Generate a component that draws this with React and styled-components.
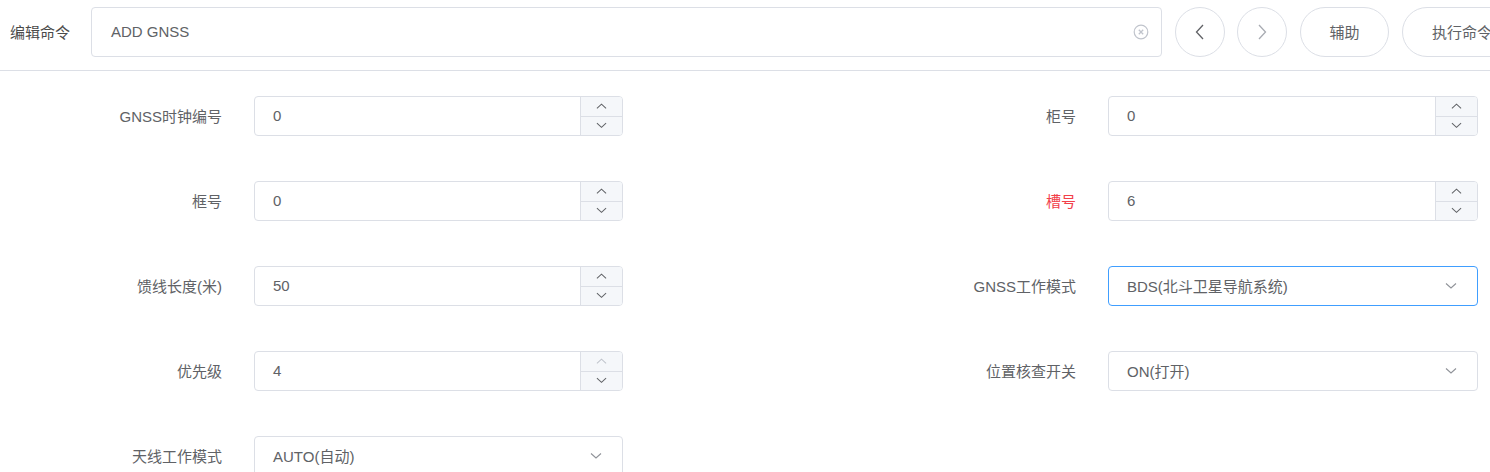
import React from "react";
import styled, { createGlobalStyle } from "styled-components";

const Global = createGlobalStyle`
  html, body { margin: 0; padding: 0; background: #fff; overflow: hidden; }
  body { font-family: "Liberation Sans", "Noto Sans CJK SC", sans-serif; color: #606266; }
  * { box-sizing: border-box; }
`;

const Page = styled.div`
  width: 1490px;
  height: 472px;
  overflow: hidden;
`;

const TopBar = styled.div`
  display: flex;
  align-items: center;
  height: 71px;
  padding: 7px 0 14px 10px;
  border-bottom: 1px solid #dcdfe6;
  white-space: nowrap;
`;

const TopLabel = styled.div`
  width: 81px;
  flex: none;
  font-size: 15px;
  color: #4a4a4a;
`;

const CmdInput = styled.div`
  position: relative;
  flex: none;
  width: 1071px;
  height: 50px;
  border: 1px solid #dcdfe6;
  border-radius: 4px;
  display: flex;
  align-items: center;
  padding-left: 19px;
  font-size: 15px;
  color: #606266;
`;

const ClearIcon = styled.span`
  position: absolute;
  right: 12px;
  top: 50%;
  transform: translateY(-50%);
  display: flex;
`;

const Circle = styled.button`
  flex: none;
  width: 50px;
  height: 50px;
  margin-left: ${(p) => p.$ml}px;
  border: 1px solid #dcdfe6;
  border-radius: 50%;
  background: #fff;
  display: flex;
  align-items: center;
  justify-content: center;
  padding: 0;
`;

const Pill = styled.button`
  flex: none;
  width: ${(p) => p.$w}px;
  height: 50px;
  margin-left: 13px;
  border: 1px solid #dcdfe6;
  border-radius: 25px;
  background: #fff;
  font-family: inherit;
  font-size: 15px;
  color: #606266;
  padding: 0;
  white-space: nowrap;
`;

const FormGrid = styled.div`
  display: grid;
  grid-template-columns: 222px 369px 421px 370px;
  column-gap: 32px;
  row-gap: 45px;
  padding-top: 25px;
`;

const Label = styled.div`
  height: 40px;
  display: flex;
  align-items: center;
  justify-content: flex-end;
  padding-bottom: 1px;
  font-size: 15px;
  color: ${(p) => (p.$required ? "#f2404a" : "#606266")};
  white-space: nowrap;
`;

const Box = styled.div`
  position: relative;
  height: 40px;
  border: 1px solid ${(p) => (p.$focus ? "#409eff" : "#dcdfe6")};
  border-radius: 4px;
  display: flex;
  align-items: center;
  padding-left: 18px;
  font-size: 15px;
  color: #606266;
  background: #fff;
  overflow: hidden;
`;

const Value = styled.span`
  flex: 1;
  white-space: nowrap;
  padding-bottom: 1px;
`;

const Stepper = styled.div`
  align-self: stretch;
  width: 42px;
  display: flex;
  flex-direction: column;
  border-left: 1px solid #dcdfe6;
  background: #f5f7fa;
`;

const StepBtn = styled.div`
  flex: 1;
  display: flex;
  align-items: center;
  justify-content: center;
  & + & { border-top: 1px solid #dcdfe6; }
`;

const Arrow = styled.span`
  width: 40px;
  display: flex;
  justify-content: center;
  padding-right: 12px;
`;

const Chevron = ({ dir = "down", color = "#606266", size = 10 }) => {
  const d =
    dir === "down"
      ? "M1 3.5 L6 8 L11 3.5"
      : dir === "up"
      ? "M1 8 L6 3.5 L11 8"
      : dir === "left"
      ? "M8 1 L3 6 L8 11"
      : "M4 1 L9 6 L4 11";
  return (
    <svg width={size} height={size} viewBox="0 0 12 12" fill="none">
      <path d={d} stroke={color} strokeWidth="1.1" />
    </svg>
  );
};

const NumberField = ({ value, upDisabled }) => (
  <Box>
    <Value>{value}</Value>
    <Stepper>
      <StepBtn>
        <Chevron dir="up" color={upDisabled ? "#c0c4cc" : "#606266"} size={11} />
      </StepBtn>
      <StepBtn>
        <Chevron dir="down" size={11} />
      </StepBtn>
    </Stepper>
  </Box>
);

const SelectField = ({ value, focus }) => (
  <Box $focus={focus}>
    <Value>{value}</Value>
    <Arrow>
      <Chevron dir="down" color="#909399" size={12} />
    </Arrow>
  </Box>
);

const Empty = styled.div``;

export default function App() {
  return (
    <Page>
      <Global />
      <TopBar>
        <TopLabel>编辑命令</TopLabel>
        <CmdInput>
          ADD GNSS
          <ClearIcon>
            <svg width="16" height="16" viewBox="0 0 16 16" fill="none">
              <circle cx="8" cy="8" r="6.8" stroke="#c0c4cc" strokeWidth="1.2" />
              <path d="M5.8 5.8 L10.2 10.2 M10.2 5.8 L5.8 10.2" stroke="#c0c4cc" strokeWidth="1.3" />
            </svg>
          </ClearIcon>
        </CmdInput>
        <Circle $ml={13}>
          <svg width="16" height="18" viewBox="0 0 16 18" fill="none">
            <path d="M11 2 L4.5 9 L11 16" stroke="#606266" strokeWidth="1.3" />
          </svg>
        </Circle>
        <Circle $ml={12}>
          <svg width="16" height="18" viewBox="0 0 16 18" fill="none">
            <path d="M5 2 L11.5 9 L5 16" stroke="#a8abb2" strokeWidth="1.3" />
          </svg>
        </Circle>
        <Pill $w={89}>辅助</Pill>
        <Pill $w={120}>执行命令</Pill>
      </TopBar>
      <FormGrid>
        <Label>GNSS时钟编号</Label>
        <NumberField value="0" />
        <Label>柜号</Label>
        <NumberField value="0" />

        <Label>框号</Label>
        <NumberField value="0" />
        <Label $required>槽号</Label>
        <NumberField value="6" />

        <Label>馈线长度(米)</Label>
        <NumberField value="50" />
        <Label>GNSS工作模式</Label>
        <SelectField value="BDS(北斗卫星导航系统)" focus />

        <Label>优先级</Label>
        <NumberField value="4" upDisabled />
        <Label>位置核查开关</Label>
        <SelectField value="ON(打开)" />

        <Label>天线工作模式</Label>
        <SelectField value="AUTO(自动)" />
        <Empty />
        <Empty />
      </FormGrid>
    </Page>
  );
}
